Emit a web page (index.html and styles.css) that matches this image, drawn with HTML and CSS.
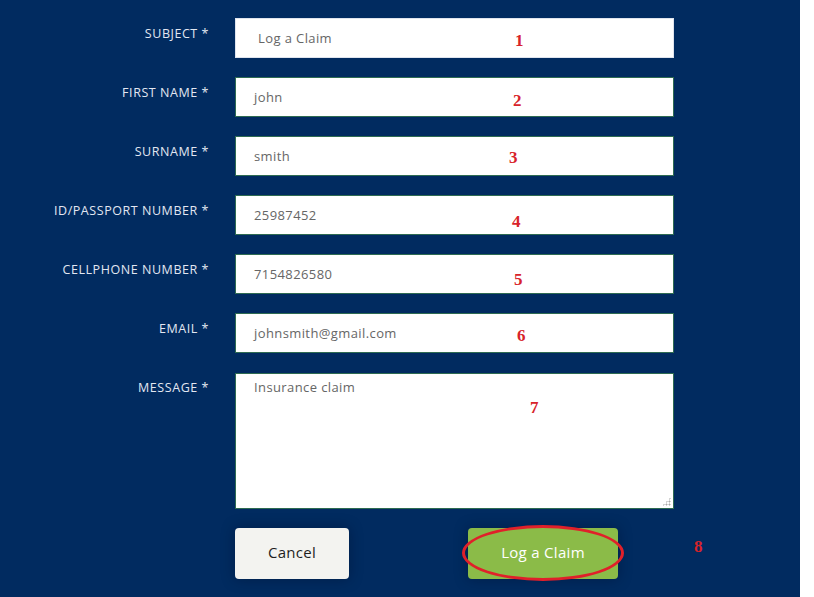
FILE: index.html
```html
<!DOCTYPE html>
<html>
<head>
<meta charset="utf-8">
<link rel="stylesheet" href="styles.css">
</head>
<body>
<div class="panel">
  <form class="form">
    <label class="label">SUBJECT *</label>
    <div class="field"><div class="input first">Log a Claim</div><span class="note" style="left:280px;top:13px">1</span></div>

    <label class="label">FIRST NAME *</label>
    <div class="field"><div class="input">john</div><span class="note" style="left:278px;top:14px">2</span></div>

    <label class="label">SURNAME *</label>
    <div class="field"><div class="input">smith</div><span class="note" style="left:274px;top:12px">3</span></div>

    <label class="label">ID/PASSPORT NUMBER *</label>
    <div class="field"><div class="input">25987452</div><span class="note" style="left:277px;top:17px">4</span></div>

    <label class="label">CELLPHONE NUMBER *</label>
    <div class="field"><div class="input">7154826580</div><span class="note" style="left:279px;top:16px">5</span></div>

    <label class="label">EMAIL *</label>
    <div class="field"><div class="input">johnsmith@gmail.com</div><span class="note" style="left:282px;top:13px">6</span></div>

    <label class="label msg">MESSAGE *</label>
    <div class="field msg-field"><textarea class="input area">Insurance claim</textarea><span class="grip"></span><span class="note" style="left:295px;top:25px">7</span></div>

    <div class="spacer"></div>
    <div class="actions">
      <button type="button" class="btn cancel">Cancel</button>
      <div class="submit-wrap">
        <button type="button" class="btn submit">Log a Claim</button>
        <span class="ring"></span>
        <span class="note eight">8</span>
      </div>
    </div>
  </form>
</div>
</body>
</html>
```
FILE: styles.css
```css
html, body {
  margin: 0;
  padding: 0;
  background: #ffffff;
}
body {
  font-family: "Open Sans", "Noto Sans", sans-serif;
}
.panel {
  width: 800px;
  height: 597px;
  background: #012b60;
  padding-top: 18px;
  box-sizing: border-box;
}
.form {
  display: grid;
  grid-template-columns: 209px 439px;
  column-gap: 26px;
  row-gap: 19px;
}
.label {
  text-align: right;
  color: #e2e7f2;
  font-size: 12.5px;
  line-height: 16px;
  padding-top: 8px;
  letter-spacing: 0.55px;
}
.label.msg {
  padding-top: 8px;
}
.field {
  position: relative;
}
.msg-field {
  margin-top: 1px;
}
.input {
  display: block;
  box-sizing: border-box;
  width: 439px;
  height: 40px;
  background: #ffffff;
  border: 1px solid #2e6b52;
  color: #666;
  font-family: "Open Sans", "Noto Sans", sans-serif;
  font-size: 13px;
  letter-spacing: 0.4px;
  line-height: 38px;
  padding: 0 18px;
  margin: 0;
}
.input.first {
  border-color: #dfe4ee;
  padding-left: 22px;
}
.area {
  height: 136px;
  line-height: 16px;
  padding: 5px 18px;
  resize: none;
  outline: none;
}
.grip {
  position: absolute;
  right: 3px;
  bottom: 3px;
  width: 9px;
  height: 9px;
  background:
    radial-gradient(circle, #a8a8a8 0.9px, transparent 1.1px) 0 0 / 3px 3px;
  clip-path: polygon(100% 0, 100% 100%, 0 100%);
}
.note {
  position: absolute;
  font-family: "Liberation Serif", serif;
  font-weight: bold;
  font-size: 17px;
  color: #d8232a;
  line-height: 20px;
}
.spacer {
  height: 1px;
}
.actions {
  display: flex;
  align-items: center;
  gap: 119px;
  margin-top: 0;
}
.btn {
  height: 51px;
  border: none;
  border-radius: 4px;
  font-family: "Open Sans", "Noto Sans", sans-serif;
  font-size: 15px;
  letter-spacing: 0.3px;
  box-shadow: 0 0 14px rgba(0, 10, 30, 0.35);
  padding: 0 0 3px;
}
.cancel {
  width: 114px;
  background: #f3f3f0;
  color: #1e1e1e;
}
.submit-wrap {
  position: relative;
}
.submit {
  width: 150px;
  background: #8bbb48;
  color: #ffffff;
}
.ring {
  position: absolute;
  left: -6px;
  top: -3px;
  width: 156px;
  height: 50px;
  border: 3.5px solid #e0202a;
  border-radius: 50%;
  pointer-events: none;
}
.eight {
  left: 226px;
  top: 9px;
}
```
